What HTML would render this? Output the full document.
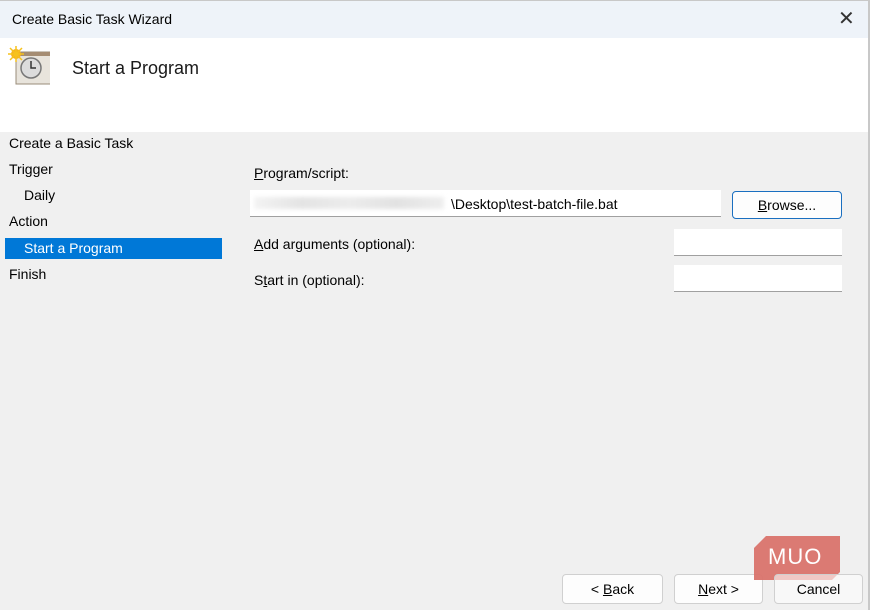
<!DOCTYPE html>
<html><head><style>
body{margin:0;width:870px;height:610px;overflow:hidden;font-family:"Liberation Sans",sans-serif;background:#f0f0f0;position:relative;color:#000}
.a{position:absolute;white-space:nowrap}
.t{font-size:14px}
u{text-decoration:underline}
.box{position:absolute;background:#fff;border-bottom:1px solid #a0a0a0}
.btn{position:absolute;background:#fdfdfd;border:1px solid #d0d0d0;border-radius:4px;font-size:14px;text-align:center;box-sizing:border-box}
</style></head><body>
<div class="a" style="left:0;top:0;width:870px;height:38px;background:#eef3f9;border-top:1px solid #c8c8c8;box-sizing:border-box"></div>
<div class="a t" style="left:12px;top:11px;font-size:14px">Create Basic Task Wizard</div>
<div class="a" style="left:838px;top:6px;font-size:20px;color:#333">✕</div>
<div class="a" style="left:0;top:38px;width:870px;height:94px;background:#fff"></div>
<svg class="a" style="left:8px;top:46px" width="42" height="40" viewBox="0 0 42 40">
<rect x="8" y="6" width="38" height="32" fill="#e8e4dc" stroke="#9a8c7a"/>
<rect x="8" y="6" width="38" height="4" fill="#a58d73"/>
<circle cx="23" cy="22" r="10" fill="#dcdcdc" stroke="#777" stroke-width="1.5"/>
<path d="M23 15v7h5" stroke="#333" stroke-width="1.5" fill="none"/>
<circle cx="8" cy="8" r="5" fill="#f6b11d"/>
<path d="M8 0v16M0 8h16M2 2l12 12M14 2L2 14" stroke="#f6c21d" stroke-width="1.5"/>
</svg>
<div class="a" style="left:72px;top:58px;font-size:18px;color:#1a1a1a">Start a Program</div>
<div class="a t" style="left:9px;top:135px">Create a Basic Task</div>
<div class="a t" style="left:9px;top:161px">Trigger</div>
<div class="a t" style="left:24px;top:187px">Daily</div>
<div class="a t" style="left:9px;top:213px">Action</div>
<div class="a" style="left:5px;top:238px;width:217px;height:21px;background:#0078d7"></div>
<div class="a t" style="left:24px;top:240px;color:#fff">Start a Program</div>
<div class="a t" style="left:9px;top:266px">Finish</div>
<div class="a t" style="left:254px;top:165px"><u>P</u>rogram/script:</div>
<div class="box" style="left:250px;top:190px;width:471px;height:26px"></div>
<div class="a" style="left:254px;top:197px;width:190px;height:12px;background:linear-gradient(90deg,#f3f3f3,#e4e4e4,#ececec,#e2e2e2,#eeeeee);filter:blur(2px)"></div>
<div class="a t" style="left:451px;top:196px">\Desktop\test-batch-file.bat</div>
<div class="btn" style="left:732px;top:191px;width:110px;height:28px;border:1px solid #1a6fc0;line-height:26px"><u>B</u>rowse...</div>
<div class="a t" style="left:254px;top:236px"><u>A</u>dd arguments (optional):</div>
<div class="box" style="left:674px;top:229px;width:168px;height:26px"></div>
<div class="a t" style="left:254px;top:272px">S<u>t</u>art in (optional):</div>
<div class="box" style="left:674px;top:265px;width:168px;height:26px"></div>
<div class="btn" style="left:562px;top:574px;width:101px;height:30px;line-height:28px">&lt; <u>B</u>ack</div>
<div class="btn" style="left:674px;top:574px;width:89px;height:30px;line-height:28px"><u>N</u>ext &gt;</div>
<svg class="a" style="left:754px;top:536px" width="86" height="44"><path d="M12 0H86V36L78 44H0V12Z" fill="#d9736b" opacity="0.95"/><text x="14" y="28" font-family="Liberation Sans" font-size="22" fill="#fff" letter-spacing="1">MUO</text></svg>
<div class="btn" style="left:774px;top:574px;width:89px;height:30px;line-height:28px;background:rgba(253,253,253,0.6)">Cancel</div>
<div class="a" style="left:868px;top:0;width:2px;height:610px;background:#c8c8c8"></div>
</body></html>
